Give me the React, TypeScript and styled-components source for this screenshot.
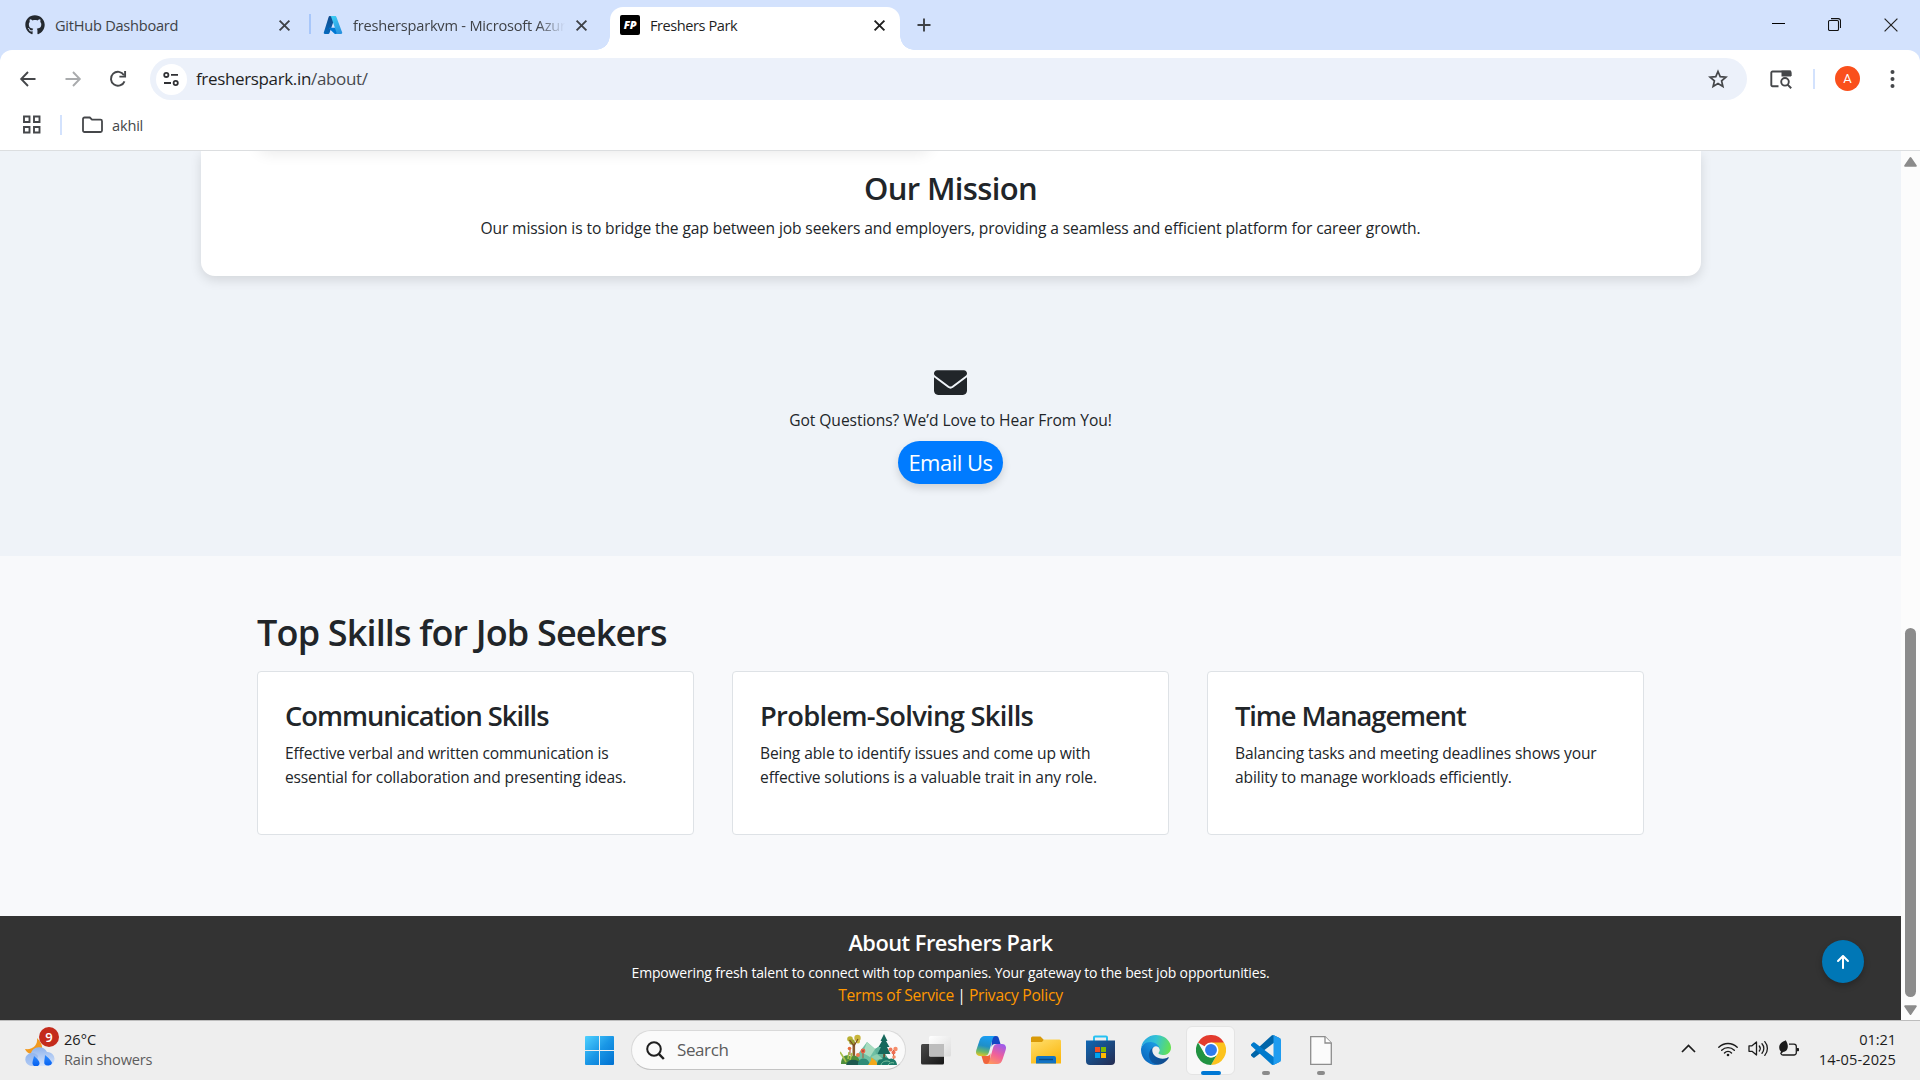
import React from "react";
import styled, { createGlobalStyle, css } from "styled-components";
import { FaGithub } from "react-icons/fa";
import { FaEnvelope, FaArrowUp } from "react-icons/fa6";

const GlobalStyle = createGlobalStyle`
  * { box-sizing: border-box; }
  html, body { margin: 0; padding: 0; }
  body {
    width: 1920px;
    height: 1080px;
    overflow: hidden;
    font-family: "Open Sans", "Noto Sans", sans-serif;
    color: #212529;
  }
  h1, h2, h3, h4, p { margin: 0; }
  svg { display: block; flex: none; }
`;

const Screen = styled.div`
  display: flex;
  flex-direction: column;
  width: 1920px;
  height: 1080px;
  overflow: hidden;
`;

/* ---------- Tab strip ---------- */

const TabStrip = styled.div`
  display: flex;
  height: 50px;
  background: #d3e2fd;
  color: #3f4247;
`;

const Tab = styled.div<{ $width: number; $start: number; $end: number; $active?: boolean }>`
  position: relative;
  display: flex;
  align-items: center;
  gap: 10px;
  width: ${(p) => p.$width}px;
  margin-top: 7px;
  padding: 0 ${(p) => p.$end}px 7px ${(p) => p.$start}px;
  ${(p) =>
    p.$active &&
    css`
      background: #fff;
      border-radius: 13px 13px 0 0;
      color: #1f1f1f;
      &::before,
      &::after {
        content: "";
        position: absolute;
        bottom: 0;
        width: 14px;
        height: 14px;
      }
      &::before {
        left: -14px;
        background: radial-gradient(circle at 0 0, transparent 13.5px, #fff 14px);
      }
      &::after {
        right: -14px;
        background: radial-gradient(circle at 100% 0, transparent 13.5px, #fff 14px);
      }
    `}
`;

const TabTitle = styled.span<{ $fade?: boolean; $track: number }>`
  flex: 1;
  min-width: 0;
  overflow: hidden;
  white-space: nowrap;
  font-size: 14.6px;
  line-height: 20px;
  letter-spacing: ${(p) => p.$track}px;
  ${(p) =>
    p.$fade &&
    css`
      mask-image: linear-gradient(to right, #000 87%, transparent 100%);
    `}
`;

const TabDivider = styled.div`
  width: 2px;
  height: 20px;
  margin-top: 14px;
  margin-left: -1px;
  background: #a8c7fa;
`;

const Favicon = styled.span`
  display: grid;
  place-items: center;
  width: 20px;
  height: 20px;
  border-radius: 2px;
  background: #000;
  color: #fff;
  font: italic 800 11px/20px "Open Sans", sans-serif;
  letter-spacing: -0.3px;
`;

const NewTab = styled.div`
  display: flex;
  align-items: center;
  height: 50px;
  padding-left: 17px;
`;

const WindowButtons = styled.div`
  display: flex;
  align-items: center;
  gap: 43px;
  height: 50px;
  margin-left: auto;
  padding: 0 22px 1px 0;
`;

const CloseIcon = () => (
  <svg width="13" height="13" viewBox="0 0 13 13">
    <path d="M1.600 1.600l9.800 9.800M11.400 1.600l-9.800 9.800" stroke="currentColor" strokeWidth="1.900" />
  </svg>
);

const AzureIcon = () => (
  <svg width="20" height="20" viewBox="0 0 20 20">
    <defs>
      <linearGradient id="azL" x1="0.6" y1="0" x2="0.3" y2="1">
        <stop offset="0" stopColor="#114a8b" />
        <stop offset="1" stopColor="#0669bc" />
      </linearGradient>
      <linearGradient id="azR" x1="0.3" y1="0" x2="0.7" y2="1">
        <stop offset="0" stopColor="#3ccbf4" />
        <stop offset="1" stopColor="#2892df" />
      </linearGradient>
    </defs>
    <path d="M6.700 1h5.700L6.400 18.200c-.2.500-.6.800-1.100.800H1.900c-.8 0-1.400-.8-1.100-1.500L5.700 1.800C5.800 1.300 6.200 1 6.700 1z" fill="url(#azL)" />
    <path d="M15 12.700H6.300c-.4 0-.6.500-.3.800l5.600 5.200c.2.200.4.200.6.200h5z" fill="#0078d4" />
    <path d="M13.300 1.800c-.2-.5-.6-.8-1.100-.8H7c.5 0 .9.300 1.100.8l5.400 15.700c.2.700-.3 1.500-1.100 1.500h5.700c.8 0 1.300-.8 1.100-1.500z" fill="url(#azR)" />
  </svg>
);

/* ---------- Toolbar ---------- */

const ToolbarBack = styled.div`
  background: #d3e2fd;
`;

const Toolbar = styled.div`
  display: flex;
  align-items: center;
  height: 58px;
  padding-left: 18px;
  background: #fff;
  border-radius: 12px 12px 0 0;
  color: #45474a;
`;

const NavButtons = styled.div`
  display: flex;
  align-items: center;
  gap: 25px;
  width: 132px;
`;

const Omnibox = styled.div`
  display: flex;
  align-items: center;
  width: 1597px;
  height: 42px;
  margin-right: 23px;
  padding: 0 19px 0 6px;
  border-radius: 21px;
  background: #ecf1fa;
`;

const SiteInfo = styled.div`
  display: grid;
  place-items: center;
  width: 31px;
  height: 31px;
  padding-right: 1px;
  border-radius: 50%;
  background: #fff;
`;

const Url = styled.div`
  flex: 1;
  margin-left: 9px;
  font-size: 17px;
  line-height: 24px;
  letter-spacing: -0.35px;
  color: #474a50;
  b {
    font-weight: 400;
    color: #1f1f1f;
  }
`;

const ToolbarDivider = styled.div<{ $left: number; $right: number }>`
  width: 2px;
  height: 20px;
  margin: 0 ${(p) => p.$right}px 0 ${(p) => p.$left}px;
  background: #d3e2fd;
`;

const Avatar = styled.div`
  display: grid;
  place-items: center;
  width: 25px;
  height: 25px;
  margin: 0 30px 1px 0;
  border-radius: 50%;
  background: #fa501c;
  color: #fff;
  font: 400 13px/25px Roboto, sans-serif;
`;

const BookmarksBar = styled.div`
  display: flex;
  align-items: center;
  height: 43px;
  padding: 0 0 9px 22px;
  border-bottom: 1px solid #dcdee0;
  background: #fff;
  color: #45474a;
`;

const BookmarkName = styled.span`
  margin-left: 9px;
  font-size: 14.6px;
  line-height: 20px;
  letter-spacing: -0.2px;
`;

/* ---------- Page ---------- */

const Viewport = styled.div`
  position: relative;
  display: flex;
  height: 869px;
`;

const Page = styled.main`
  display: flex;
  flex-direction: column;
  width: 1901px;
  background: #f8f9fb;
`;

const MissionSection = styled.section`
  display: flex;
  flex-direction: column;
  align-items: center;
  height: 405px;
  overflow: hidden;
  background: #eff3f8;
`;

const MissionCard = styled.div`
  position: relative;
  width: 1500px;
  height: 125px;
  padding-top: 18px;
  border-radius: 0 0 14px 14px;
  background: #fff;
  box-shadow: 0 4px 12px rgba(0, 0, 0, 0.12);
  text-align: center;
`;

const ImageShadow = styled.div`
  position: absolute;
  top: -22px;
  left: 57px;
  width: 672px;
  height: 20px;
  border-radius: 10px;
  box-shadow: 0 4px 15px rgba(0, 0, 0, 0.09);
`;

const MissionTitle = styled.h2`
  margin-bottom: 9px;
  font-size: 31px;
  font-weight: 600;
  line-height: 38px;
  letter-spacing: -0.65px;
`;

const BodyText = styled.p<{ $track?: number }>`
  font-size: 15.6px;
  line-height: 24px;
  letter-spacing: ${(p) => p.$track ?? -0.11}px;
  white-space: nowrap;
`;

const Contact = styled.div`
  display: flex;
  flex-direction: column;
  align-items: center;
  gap: 9px;
  margin-top: 90px;
`;

const EmailButton = styled.a`
  display: grid;
  place-items: center;
  width: 105px;
  height: 43px;
  border-radius: 22px;
  background: #007bff;
  box-shadow: 0 4px 8px rgba(0, 0, 0, 0.14);
  color: #fff;
  font-size: 22px;
  line-height: 43px;
  letter-spacing: -0.5px;
  white-space: nowrap;
`;

const SkillsSection = styled.section`
  height: 360px;
  padding: 55px 257px 0;
`;

const SkillsTitle = styled.h1`
  margin-bottom: 16px;
  font-size: 36px;
  font-weight: 600;
  line-height: 44px;
  letter-spacing: -0.84px;
`;

const SkillsGrid = styled.div`
  display: grid;
  grid-template-columns: repeat(3, 437px);
  gap: 38px;
`;

const SkillCard = styled.article`
  height: 164px;
  padding: 27px 27px 26px;
  border: 1px solid #dee2e6;
  border-radius: 4px;
  background: #fff;
`;

const SkillName = styled.h3<{ $track: number }>`
  margin-bottom: 8px;
  font-size: 27.3px;
  font-weight: 600;
  line-height: 34px;
  letter-spacing: ${(p) => p.$track}px;
`;

const Footer = styled.footer`
  height: 104px;
  padding-top: 13px;
  background: #333;
  color: #fff;
  text-align: center;
`;

const FooterTitle = styled.h4`
  margin-bottom: 6px;
  font-size: 21.8px;
  font-weight: 600;
  line-height: 27px;
  letter-spacing: -0.5px;
`;

const FooterText = styled.p`
  font-size: 14px;
  line-height: 21px;
  letter-spacing: -0.165px;
`;

const FooterLinks = styled.p`
  font-size: 15.6px;
  line-height: 24px;
  letter-spacing: -0.26px;
  word-spacing: -0.5px;
  a {
    color: #ff9800;
    word-spacing: 0;
  }
`;

const ToTop = styled.button`
  position: absolute;
  right: 56px;
  bottom: 37px;
  display: grid;
  place-items: center;
  width: 42px;
  height: 43px;
  padding: 0;
  border: 0;
  border-radius: 50%;
  background: #0077b6;
  box-shadow: 0 3px 6px rgba(0, 0, 0, 0.25);
  color: #fff;
`;

const Scrollbar = styled.div`
  display: flex;
  flex-direction: column;
  align-items: center;
  width: 19px;
  padding: 6px 0 5px;
  background: #fcfcfc;
`;

const Thumb = styled.div`
  width: 11px;
  height: 369px;
  margin: auto 0 8px;
  border-radius: 6px;
  background: #8b8b8b;
`;

/* ---------- Taskbar ---------- */

const Taskbar = styled.div`
  display: flex;
  align-items: center;
  height: 60px;
  padding-bottom: 1px;
  border-top: 1px solid #bdbdbd;
  background: #eee;
  color: #1c1c1c;
`;

const Weather = styled.div`
  position: relative;
  display: flex;
  align-items: center;
  gap: 9px;
  width: 585px;
  padding: 0 0 3px 25px;
`;

const Lines = styled.div<{ $end?: boolean }>`
  display: flex;
  flex-direction: column;
  align-items: ${(p) => (p.$end ? "flex-end" : "flex-start")};
`;

const Line = styled.span<{ $muted?: boolean; $track?: number }>`
  font-size: 14.6px;
  line-height: 20px;
  letter-spacing: ${(p) => p.$track ?? 0}px;
  color: ${(p) => (p.$muted ? "#5d5d5d" : "inherit")};
`;

const Badge = styled.span`
  position: absolute;
  left: 39px;
  top: -2px;
  width: 20px;
  height: 20px;
  border-radius: 50%;
  background: #c42b1c;
  color: #fff;
  font-size: 13px;
  font-weight: 600;
  line-height: 20px;
  text-align: center;
`;

const SearchBox = styled.div`
  display: flex;
  align-items: center;
  width: 275px;
  height: 40px;
  margin: 0 2px 0 17px;
  padding: 0 7px 0 14px;
  border: 1px solid #d9d9d9;
  border-bottom-color: #c4c4c4;
  border-radius: 20px;
  background: #fafafa;
`;

const SearchLabel = styled.span`
  flex: 1;
  margin-left: 12px;
  font-size: 17px;
  line-height: 24px;
  letter-spacing: -0.4px;
  color: #5c5c5c;
`;

const AppSlot = styled.div<{ $active?: boolean; $running?: boolean }>`
  position: relative;
  display: grid;
  place-items: center;
  width: 49px;
  height: 49px;
  margin: 0 3px;
  border: 1px solid ${(p) => (p.$active ? "#e4e4e4" : "transparent")};
  border-radius: 6px;
  background: ${(p) => (p.$active ? "#f8f8f8" : "transparent")};
  ${(p) =>
    (p.$active || p.$running) &&
    css`
      &::after {
        content: "";
        position: absolute;
        bottom: -1px;
        left: 50%;
        width: ${p.$active ? 20 : 8}px;
        height: 4px;
        border-radius: 2px;
        background: ${p.$active ? "#0078d4" : "#8a8a8a"};
        transform: translateX(-50%);
      }
    `}
`;

const Tray = styled.div`
  display: flex;
  align-items: center;
  margin-left: auto;
  padding: 0 24px 3px 0;
`;

const TrayIcons = styled.div`
  display: flex;
  align-items: center;
  gap: 10px;
  margin: 0 20px 0 22px;
`;

const WeatherIcon = () => (
  <svg width="30" height="34" viewBox="0 0 30 34">
    <defs>
      <linearGradient id="cloud" x1="0" y1="0" x2="0" y2="1">
        <stop offset="0" stopColor="#8fb3ec" />
        <stop offset="1" stopColor="#d7e5fb" />
      </linearGradient>
      <linearGradient id="drop" x1="0" y1="0" x2="0" y2="1">
        <stop offset="0" stopColor="#2f8cff" />
        <stop offset="1" stopColor="#0560f0" />
      </linearGradient>
    </defs>
    <path d="M12 6c1 7-4 12-12 11 2 5 9 7 14 5 4-3 5-9-2-16z" fill="#f29a1f" />
    <path d="M7 34a7 6.500 0 0 1-1-12.900A8.500 8 0 0 1 22 20a7 7 0 0 1 1 14z" fill="url(#cloud)" />
    <path d="M7 34a6.800 6.500 0 1 1 6-10l-2 10z" fill="#7da6ea" opacity=".45" />
    <path d="M9 24c4 3.500 5.500 5.500 5.500 7a3.500 3 0 0 1-7 .5c-.2-2 1-4.500 1.500-7.500zM20 23c5 4 7 7 7 8a4 3 0 0 1-7.500 1c-.7-2 .3-5 .5-9z" fill="url(#drop)" />
  </svg>
);

const StartIcon = () => (
  <svg width="29" height="29" viewBox="0 0 29 29">
    <defs>
      <linearGradient id="start" x1="0" y1="0" x2="1" y2="1">
        <stop offset="0" stopColor="#4fd1ff" />
        <stop offset="0.5" stopColor="#1a97e6" />
        <stop offset="1" stopColor="#0070d0" />
      </linearGradient>
    </defs>
    <path d="M1 0h13v14H0V1a1 1 0 0 1 1-1zM15 0h13a1 1 0 0 1 1 1v13H15zM0 15h14v14H1a1 1 0 0 1-1-1zM15 15h14v13a1 1 0 0 1-1 1H15z" fill="url(#start)" />
  </svg>
);

const ForestArt = () => (
  <svg width="58" height="32" viewBox="0 0 58 32">
    <path d="M15 24L27 8l8 7 5-3 9 14v4H14z" fill="#6fc0a4" />
    <path d="M27 8l8 7-5 8-7-4z" fill="#a9dcc0" />
    <path d="M35 15l5-3 9 14H37z" fill="#5fb39a" />
    <path d="M12.500 26V8h2.600v18z" fill="#8a5a2b" />
    <circle cx="10" cy="5" r="2.800" fill="#b9b133" />
    <circle cx="17.500" cy="4" r="3.200" fill="#c8b53a" />
    <circle cx="12" cy="8" r="2.800" fill="#9aa132" />
    <circle cx="18" cy="7.500" r="2" fill="#d0bd3f" />
    <path d="M9.500 6l4.500 6 4-7" stroke="#7a4a20" strokeWidth="1.200" fill="none" />
    <path d="M44 0l-3.500 7H42l-3.500 6H41l-3.500 7h13L47 13h2.500L46 7h1.500z" fill="#17695c" />
    <path d="M43.300 20h1.600v4h-1.600z" fill="#6a4526" />
    <path d="M1 30c0-8 6-11 10-7 4-4 9 0 9 7z" fill="#4f8f3c" />
    <path d="M2 21l4 7M0 18l5 8M9 18l-1 7M12 19l-2 7" stroke="#a8bf4b" strokeWidth="1.600" />
    <path d="M6 31c2-7 12-7 16 0z" fill="#1f5a50" />
    <path d="M18 31c-1-7 8-9 11-3l1 3z" fill="#2f8c78" />
    <path d="M28 31c2-3 4-5 3-8l5 4 2 4z" fill="#f2a91c" />
    <path d="M37 31c0-7 8-10 12-6 4-2 8 2 8 6z" fill="#1d7a68" />
    <path d="M41 31c1-4 6-5 9-3M48 31c1-2 4-3 6-2" stroke="#7ec4a0" fill="none" />
    <path d="M31 23l6-3 6 5-7 1z" fill="#8fd0b0" />
    <path d="M53.500 16v9M23 18v6M10 16v5" stroke="#a6563c" />
    <circle cx="50.500" cy="15.500" r="2" fill="#f0785a" />
    <circle cx="55.500" cy="15" r="2.200" fill="#f58d6a" />
    <circle cx="53.500" cy="18.500" r="2" fill="#ee6d52" />
    <circle cx="54" cy="23" r="1.800" fill="#f58d6a" />
    <circle cx="23" cy="17" r="2.400" fill="#e8664a" />
    <circle cx="23" cy="17" r=".8" fill="#8d2f24" />
    <circle cx="18" cy="21" r="2" fill="#ee7a4c" />
    <circle cx="9.500" cy="14.500" r="1.800" fill="#e76a3c" />
  </svg>
);

const TaskViewIcon = () => (
  <svg width="30" height="29" viewBox="0 0 30 29">
    <defs>
      <linearGradient id="tvd" x1="0" y1="0" x2="1" y2="1">
        <stop offset="0" stopColor="#4a4a4a" />
        <stop offset="1" stopColor="#161616" />
      </linearGradient>
      <linearGradient id="tvl" x1="0" y1="0" x2="1" y2="1">
        <stop offset="0" stopColor="#fff" />
        <stop offset="1" stopColor="#dcdcdc" />
      </linearGradient>
    </defs>
    <rect x="0" y="8" width="23" height="20.500" rx="1.500" fill="url(#tvd)" />
    <rect x="8" y="0" width="22" height="20.500" rx="1.500" fill="url(#tvl)" />
    <path d="M8 8h15v12.500H9.500A1.500 1.500 0 0 1 8 19z" fill="#bdbdbd" />
  </svg>
);

const CopilotIcon = () => (
  <svg width="30" height="28" viewBox="0 0 30 28">
    <defs>
      <linearGradient id="cpA" x1="0.300" y1="0" x2="0.100" y2="1">
        <stop offset="0" stopColor="#1a9df0" />
        <stop offset="0.450" stopColor="#1f8fc8" />
        <stop offset="0.750" stopColor="#6bb86a" />
        <stop offset="1" stopColor="#f5c518" />
      </linearGradient>
      <linearGradient id="cpB" x1="0.700" y1="0" x2="0.200" y2="1">
        <stop offset="0" stopColor="#a05be8" />
        <stop offset="0.500" stopColor="#f0609a" />
        <stop offset="1" stopColor="#ff9a5c" />
      </linearGradient>
    </defs>
    <path d="M16 0h4c2 0 2.500 1 3 3l1.500 5H19c-2 0-3 1-3.500 3z" fill="#1446c4" />
    <path d="M14 28h-4c-2 0-2.500-1-3-3l-1.500-5H11c2 0 3-1 3.500-3z" fill="#f0643c" />
    <path d="M9 0h11c-2 0-3 1.500-3.500 3.500L13 16c-.8 2.800-2 4-4.500 4H4c-3 0-5-2-3.500-6.500L3.500 4.500C4.500 1.500 6 0 9 0z" fill="url(#cpA)" />
    <path d="M21 28H10c2 0 3-1.500 3.500-3.500L17 12c.8-2.800 2-4 4.500-4H26c3 0 5 2 3.500 6.500l-3 9C25.500 26.500 24 28 21 28z" fill="url(#cpB)" />
  </svg>
);

const FolderIcon = () => (
  <svg width="30" height="28" viewBox="0 0 30 28">
    <defs>
      <linearGradient id="fld" x1="0" y1="0" x2="0.600" y2="1">
        <stop offset="0" stopColor="#ffdf6e" />
        <stop offset="1" stopColor="#fcb912" />
      </linearGradient>
    </defs>
    <path d="M0 2a1.500 1.500 0 0 1 1.500-1.500h8L13 4h3v4H0z" fill="#d99a08" />
    <path d="M0 6h11l2-2.500h15.500A1.500 1.500 0 0 1 30 5v22.500H0z" fill="url(#fld)" />
    <path d="M5 27.500V22a2 2 0 0 1 2-2h16a2 2 0 0 1 2 2v5.500z" fill="#1273c4" />
    <path d="M8 23.500h14" stroke="#0b4a86" strokeWidth="1.400" />
  </svg>
);

const StoreIcon = () => (
  <svg width="29" height="30" viewBox="0 0 29 30">
    <defs>
      <linearGradient id="store" x1="0" y1="0" x2="1" y2="1">
        <stop offset="0" stopColor="#1068b4" />
        <stop offset="1" stopColor="#252b4f" />
      </linearGradient>
    </defs>
    <path d="M8 6V2.500A1 1 0 0 1 9 1.500h11a1 1 0 0 1 1 1V6" fill="none" stroke="#27c1f2" strokeWidth="2" />
    <path d="M0 5.500h29V26a4 4 0 0 1-4 4H4a4 4 0 0 1-4-4z" fill="url(#store)" />
    <path d="M9 12h5v5H9z" fill="#f25022" />
    <path d="M15 12h5v5h-5z" fill="#7fba00" />
    <path d="M9 18h5v5H9z" fill="#00a4ef" />
    <path d="M15 18h5v5h-5z" fill="#ffb900" />
  </svg>
);

const EdgeIcon = () => (
  <svg width="30" height="30" viewBox="0 0 256 256">
    <defs>
      <linearGradient id="edA" x1="0.100" y1="0.500" x2="1" y2="0.600">
        <stop offset="0" stopColor="#0c59a4" />
        <stop offset="1" stopColor="#114a8b" />
      </linearGradient>
      <linearGradient id="edB" x1="0.900" y1="0.200" x2="0.300" y2="1">
        <stop offset="0" stopColor="#1b9de2" />
        <stop offset="0.500" stopColor="#127fd2" />
        <stop offset="1" stopColor="#0a67bd" />
      </linearGradient>
      <linearGradient id="edC" x1="0" y1="0.400" x2="1" y2="0.600">
        <stop offset="0" stopColor="#2aa7e0" />
        <stop offset="0.450" stopColor="#33c3d5" />
        <stop offset="1" stopColor="#66e24e" />
      </linearGradient>
    </defs>
    <path d="M231 190.500c-3.400 1.800-6.900 3.400-10.500 4.700a101.900 101.900 0 0 1-35.900 6.400c-47.300 0-88.500-32.500-88.500-74.300 0-11.400 6.400-21.900 16.400-27.300-42.800 1.800-53.800 46.400-53.800 72.500 0 73.900 68.100 81.400 82.800 81.400 7.900 0 19.800-2.300 27-4.600l1.300-.4a128.300 128.300 0 0 0 66.600-52.800c3-4.700-2-7.700-5.400-5.600z" fill="url(#edA)" />
    <path d="M105.700 241.400a79.200 79.200 0 0 1-22.700-21.300A80.700 80.700 0 0 1 112.500 100c3.100-1.500 8.500-4.100 15.600-4a32.400 32.400 0 0 1 25.700 13 31.900 31.900 0 0 1 6.300 18.700c0-.2 24.500-79.600-80-79.600C36 48 0 90 0 126.200c-.2 19 4 37.800 12 55A128 128 0 0 0 168.500 248.400a75.500 75.500 0 0 1-62.800-7z" fill="url(#edB)" />
    <path d="M152.300 148.900c-.9 1-3.400 2.500-3.400 5.600 0 2.600 1.700 5.200 4.800 7.300 14.300 10 41.400 8.600 41.500 8.600 10.700 0 21.100-2.900 30.300-8.300A61.400 61.400 0 0 0 256 109.100c.3-22.400-8-37.300-11.300-43.900C223.500 23.900 177.700 0 128 0A128 128 0 0 0 0 126.200c.5-36.500 36.800-66 80-66 3.500 0 23.500.3 42 10 16.400 8.600 24.900 19 30.900 29.200 6.200 10.700 7.300 24.100 7.300 29.500 0 5.300-2.700 13.300-7.900 20z" fill="url(#edC)" />
  </svg>
);

const ChromeIcon = () => (
  <svg width="30" height="30" viewBox="0 0 48 48">
    <path d="M24 24L3.200 12A24 24 0 0 1 44.800 12z" fill="#e33b2e" />
    <path d="M24 12h20.800A24 24 0 0 1 24 48l10.400-18z" fill="#fcc31e" />
    <path d="M3.200 12l10.400 18A12 12 0 0 0 34.400 30L24 48A24 24 0 0 1 3.200 12z" fill="#229342" />
    <circle cx="24" cy="24" r="12" fill="#fff" />
    <circle cx="24" cy="24" r="9.500" fill="#2f7bed" />
  </svg>
);

const VsCodeIcon = () => (
  <svg width="30" height="30" viewBox="0 0 100 100">
    <path d="M96.500 10.700L75.900.8a6.200 6.200 0 0 0-7.100 1.200L1.300 63.500a4.200 4.200 0 0 0 0 6.200l5.500 5a4.200 4.200 0 0 0 5.400.2L93.400 13.300c2.700-2 6.600-.1 6.600 3.300v-.2c0-2.400-1.400-4.600-3.500-5.700z" fill="#0065a9" />
    <path d="M96.500 89.300l-20.600 9.900a6.200 6.200 0 0 1-7.100-1.200L1.300 36.500a4.200 4.200 0 0 1 0-6.200l5.500-5a4.200 4.200 0 0 1 5.400-.2l81.200 61.600c2.700 2 6.600.1 6.600-3.300v.2c0 2.400-1.400 4.600-3.500 5.700z" fill="#007acc" />
    <path d="M75.900 99.100a6.200 6.200 0 0 1-7.100-1.200c2.300 2.300 6.200.7 6.200-2.600V4.700c0-3.300-3.900-4.900-6.200-2.600A6.200 6.200 0 0 1 75.900.9l20.600 9.900a6.200 6.200 0 0 1 3.500 5.600v67.200c0 2.400-1.400 4.600-3.500 5.600z" fill="#1f9cf0" />
  </svg>
);

const DocumentIcon = () => (
  <svg width="22" height="29" viewBox="0 0 22 29">
    <path d="M.7.700h14.300L21.300 7v21.300H.7z" fill="#fbfbfb" stroke="#8d8d8d" strokeWidth="1.300" />
    <path d="M15 .7V7h6.300" fill="#fff" stroke="#8d8d8d" strokeWidth="1.300" />
  </svg>
);

const WifiIcon = () => (
  <svg width="20" height="16" viewBox="0 0 20 16" fill="none" stroke="#1c1c1c" strokeWidth="1.400" strokeLinecap="round">
    <path d="M.8 6.300a13 13 0 0 1 18.400 0M3.700 9.200a9 9 0 0 1 12.600 0M6.500 11.900a5 5 0 0 1 7 0" />
    <circle cx="10" cy="14" r="1.300" fill="#1c1c1c" stroke="none" />
  </svg>
);

const SpeakerIcon = () => (
  <svg width="21" height="17" viewBox="0 0 21 17" fill="none" stroke="#1c1c1c" strokeWidth="1.300" strokeLinecap="round" strokeLinejoin="round">
    <path d="M1 5.800h3L8.500 2v13L4 11.300H1z" />
    <path d="M11.300 6a4 4 0 0 1 0 5M14 3.800a7 7 0 0 1 0 9.400M16.800 1.600a10.500 10.500 0 0 1 0 13.800" />
  </svg>
);

const BatteryIcon = () => (
  <svg width="20" height="17" viewBox="0 0 20 17">
    <path d="M10 4.200h5a2.300 2.300 0 0 1 2.300 2.300v6.200A2.300 2.300 0 0 1 15 15H4a2.300 2.300 0 0 1-2-1.200" fill="none" stroke="#1c1c1c" strokeWidth="1.300" />
    <path d="M18 8h1.200a.8.800 0 0 1 .8.800v1.600a.8.800 0 0 1-.8.800H18z" fill="#1c1c1c" />
    <path d="M6.800.300C3 2 .2 3.600.2 7.500c0 2 .8 3.200 1.800 4L1 14l1.500-.300L4 11.900C7.600 11.700 9 9 8.800 5.800 8.700 3.500 7.600 2 6.800.300z" fill="#1c1c1c" />
  </svg>
);

const skills = [
  {
    name: "Communication Skills",
    lines: ["Effective verbal and written communication is", "essential for collaboration and presenting ideas."],
    nameTrack: -1.03,
    track: -0.165,
  },
  {
    name: "Problem-Solving Skills",
    lines: ["Being able to identify issues and come up with", "effective solutions is a valuable trait in any role."],
    nameTrack: -0.68,
    track: -0.12,
  },
  {
    name: "Time Management",
    lines: ["Balancing tasks and meeting deadlines shows your", "ability to manage workloads efficiently."],
    nameTrack: -1.08,
    track: -0.14,
  },
];

export default function App() {
  return (
    <Screen>
      <GlobalStyle />

      <TabStrip>
        <Tab $width={310} $start={25} $end={19}>
          <FaGithub size={20} color="#24292f" />
          <TabTitle $track={-0.25}>GitHub Dashboard</TabTitle>
          <CloseIcon />
        </Tab>
        <TabDivider />
        <Tab $width={299} $start={12} $end={22}>
          <AzureIcon />
          <TabTitle $fade $track={-0.2}>
            freshersparkvm - Microsoft Azure
          </TabTitle>
          <CloseIcon />
        </Tab>
        <Tab $width={290} $start={10} $end={14} $active>
          <Favicon>FP</Favicon>
          <TabTitle $track={-0.45}>Freshers Park</TabTitle>
          <CloseIcon />
        </Tab>
        <NewTab>
          <svg width="14" height="14" viewBox="0 0 14 14">
            <path d="M7 .5v13M.5 7h13" stroke="currentColor" strokeWidth="1.900" />
          </svg>
        </NewTab>
        <WindowButtons>
          <svg width="13" height="13" viewBox="0 0 13 13">
            <path d="M0 5.500h13" stroke="#000" />
          </svg>
          <svg width="13" height="13" viewBox="0 0 13 13" fill="none" stroke="#111" strokeWidth="1.100">
            <rect x=".5" y="2.500" width="10" height="10" rx="1.200" />
            <path d="M3 .6h7.300a2.200 2.200 0 0 1 2.200 2.200V10" />
          </svg>
          <svg width="14" height="14" viewBox="0 0 14 14">
            <path d="M.6.600l12.800 12.800M13.400.600L.6 13.400" stroke="#222" strokeWidth="1.200" />
          </svg>
        </WindowButtons>
      </TabStrip>

      <ToolbarBack>
        <Toolbar>
          <NavButtons>
            <svg width="20" height="20" viewBox="0 0 20 20" fill="none" stroke="currentColor" strokeWidth="1.900">
              <path d="M17.500 10H3.500M10 3L3.200 10l6.800 7" />
            </svg>
            <svg width="20" height="20" viewBox="0 0 20 20" fill="none" stroke="#a9abad" strokeWidth="1.900">
              <path d="M2.500 10h14M10 3l6.800 7-6.800 7" />
            </svg>
            <svg width="20" height="20" viewBox="0 0 20 20" fill="none" stroke="currentColor" strokeWidth="1.900">
              <path d="M16.500 12.300A7 7 0 1 1 16 6.200" />
              <path d="M17.100 2v5.600h-5.700" />
            </svg>
          </NavButtons>
          <Omnibox>
            <SiteInfo>
              <svg width="16" height="16" viewBox="0 0 16 16" fill="none" stroke="#303134" strokeWidth="1.800">
                <circle cx="3.300" cy="3.900" r="2.100" />
                <path d="M8 3.900h7M1 12h7" />
                <circle cx="12.700" cy="12" r="2.100" />
              </svg>
            </SiteInfo>
            <Url>
              <b>fresherspark.in</b>/about/
            </Url>
            <svg width="20" height="20" viewBox="0 0 20 20" fill="none" stroke="currentColor" strokeWidth="1.700">
              <path d="M10 2.500l2.200 5.200 5.700.5-4.300 3.700 1.300 5.600-4.900-3-4.900 3 1.300-5.600-4.300-3.700 5.700-.5z" />
            </svg>
          </Omnibox>
          <svg width="22" height="20" viewBox="0 0 22 20">
            <path d="M8.500 17.200H2.500A1.200 1.200 0 0 1 1.300 16V3.700a1.200 1.200 0 0 1 1.200-1.200h17a1.200 1.200 0 0 1 1.200 1.200V7" fill="none" stroke="#45474a" strokeWidth="1.900" />
            <path d="M11.500 1.600H21v5.900h-9.500z" fill="#45474a" />
            <circle cx="15" cy="12.800" r="3.800" fill="none" stroke="#45474a" strokeWidth="1.900" />
            <path d="M17.600 15.600l3.600 3.600" stroke="#45474a" strokeWidth="2" />
          </svg>
          <ToolbarDivider $left={21} $right={20} />
          <Avatar>A</Avatar>
          <svg width="5" height="18" viewBox="0 0 5 18" fill="#45474a">
            <circle cx="2.500" cy="2" r="2" />
            <circle cx="2.500" cy="9" r="2" />
            <circle cx="2.500" cy="16" r="2" />
          </svg>
        </Toolbar>
        <BookmarksBar>
          <svg width="19" height="19" viewBox="0 0 19 19" fill="none" stroke="currentColor" strokeWidth="1.900">
            <path d="M2 1.500h5.500V7H2zM12 1.500h5.500V7H12zM2 12h5.500v5.500H2zM12 12h5.500v5.500H12z" />
          </svg>
          <ToolbarDivider $left={19} $right={20} />
          <svg width="21" height="17" viewBox="0 0 21 17" fill="none" stroke="currentColor" strokeWidth="1.800">
            <path d="M1 3a1.500 1.500 0 0 1 1.500-1.500h5.300l2.200 2.200h8.500A1.500 1.500 0 0 1 20 5.200v9.300a1.500 1.500 0 0 1-1.500 1.500h-16A1.500 1.500 0 0 1 1 14.500z" />
          </svg>
          <BookmarkName>akhil</BookmarkName>
        </BookmarksBar>
      </ToolbarBack>

      <Viewport>
        <Page>
          <MissionSection>
            <MissionCard>
              <ImageShadow />
              <MissionTitle>Our Mission</MissionTitle>
              <BodyText $track={-0.113}>
                Our mission is to bridge the gap between job seekers and employers, providing a seamless and efficient
                platform for career growth.
              </BodyText>
            </MissionCard>
            <Contact>
              <FaEnvelope size={33} />
              <BodyText $track={-0.05}>Got Questions? We’d Love to Hear From You!</BodyText>
              <EmailButton>Email Us</EmailButton>
            </Contact>
          </MissionSection>

          <SkillsSection>
            <SkillsTitle>Top Skills for Job Seekers</SkillsTitle>
            <SkillsGrid>
              {skills.map((skill) => (
                <SkillCard key={skill.name}>
                  <SkillName $track={skill.nameTrack}>{skill.name}</SkillName>
                  {skill.lines.map((line) => (
                    <BodyText key={line} $track={skill.track}>
                      {line}
                    </BodyText>
                  ))}
                </SkillCard>
              ))}
            </SkillsGrid>
          </SkillsSection>

          <Footer>
            <FooterTitle>About Freshers Park</FooterTitle>
            <FooterText>
              Empowering fresh talent to connect with top companies. Your gateway to the best job opportunities.
            </FooterText>
            <FooterLinks>
              <a>Terms of Service</a> | <a>Privacy Policy</a>
            </FooterLinks>
          </Footer>
        </Page>
        <ToTop>
          <FaArrowUp size={16} />
        </ToTop>
        <Scrollbar>
          <svg width="13" height="10" viewBox="0 0 13 10" fill="#8b8b8b">
            <path d="M5.700.6a1 1 0 0 1 1.600 0l5.300 7.600a1 1 0 0 1-.8 1.600H1.200a1 1 0 0 1-.8-1.600z" />
          </svg>
          <Thumb />
          <svg width="13" height="10" viewBox="0 0 13 10" fill="#8b8b8b">
            <path d="M5.700 9.400a1 1 0 0 0 1.600 0l5.300-7.600a1 1 0 0 0-.8-1.600H1.200a1 1 0 0 0-.8 1.600z" />
          </svg>
        </Scrollbar>
      </Viewport>

      <Taskbar>
        <Weather>
          <WeatherIcon />
          <Badge>9</Badge>
          <Lines>
            <Line>26°C</Line>
            <Line $muted $track={-0.2}>
              Rain showers
            </Line>
          </Lines>
        </Weather>
        <StartIcon />
        <SearchBox>
          <svg width="19" height="19" viewBox="0 0 19 19" fill="none" stroke="#1f1f1f" strokeWidth="2">
            <circle cx="8" cy="8" r="6.800" />
            <path d="M12.800 12.800l5 5.200" strokeWidth="2.400" />
          </svg>
          <SearchLabel>Search</SearchLabel>
          <ForestArt />
        </SearchBox>
        <AppSlot><TaskViewIcon /></AppSlot>
        <AppSlot><CopilotIcon /></AppSlot>
        <AppSlot><FolderIcon /></AppSlot>
        <AppSlot><StoreIcon /></AppSlot>
        <AppSlot><EdgeIcon /></AppSlot>
        <AppSlot $active><ChromeIcon /></AppSlot>
        <AppSlot $running><VsCodeIcon /></AppSlot>
        <AppSlot $running><DocumentIcon /></AppSlot>
        <Tray>
          <svg width="15" height="9" viewBox="0 0 15 9" fill="none" stroke="#1c1c1c" strokeWidth="1.700">
            <path d="M1 8l6.500-6.500L14 8" />
          </svg>
          <TrayIcons>
            <WifiIcon />
            <SpeakerIcon />
            <BatteryIcon />
          </TrayIcons>
          <Lines $end>
            <Line $track={-0.1}>01:21</Line>
            <Line $track={0.1}>14-05-2025</Line>
          </Lines>
        </Tray>
      </Taskbar>
    </Screen>
  );
}
